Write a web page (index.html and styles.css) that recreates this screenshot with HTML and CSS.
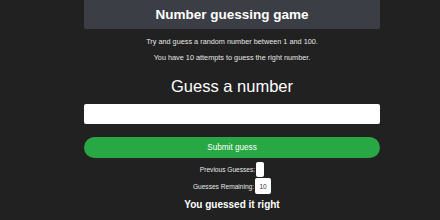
FILE: index.html
```html
<!DOCTYPE html>
<html lang="en">
<head>
    <meta charset="UTF-8">
    <meta name="viewport" content="width=device-width, initial-scale=1.0">
    <title>Number guessing game</title>
    <link rel="stylesheet" href="styles.css">
</head>
<body>
    <div class="container">
        <h1 class="title">Number guessing game</h1>
        <p class="intro first">Try and guess a random number between 1 and 100.</p>
        <p class="intro">You have 10 attempts to guess the right number.</p>

        <h2 class="guess-label">Guess a number</h2>
        <input type="text" class="guess-field" id="guessField">
        <button class="guess-submit" id="submitGuess">Submit guess</button>

        <div class="stat-row first-row">
            <span class="stat-label">Previous Guesses:</span>
            <span class="stat-box narrow" id="guesses"></span>
        </div>
        <div class="stat-row">
            <span class="stat-label">Guesses Remaining:</span>
            <span class="stat-box" id="remaining">10</span>
        </div>

        <p class="result">You guessed it right</p>
    </div>
</body>
</html>
```

FILE: styles.css
```css
body {
    margin: 0;
    background-color: #212121;
    font-family: "Liberation Sans", Arial, sans-serif;
    color: #fff;
}
.container {
    width: 296px;
    margin-left: 84px;
    display: flex;
    flex-direction: column;
}
.title {
    margin: 0;
    height: 29px;
    background: #3b3e44;
    border-radius: 0 0 2px 2px;
    font-size: 13.5px;
    font-weight: bold;
    display: flex;
    align-items: center;
    justify-content: center;
}
.intro {
    margin: 6px 0 0;
    font-size: 7.3px;
    line-height: 10px;
    text-align: center;
    color: #e6e6e6;
}
.intro.first {
    margin-top: 8px;
}
.guess-label {
    margin: 13px 0 0;
    font-size: 16.5px;
    font-weight: normal;
    line-height: 20px;
    text-align: center;
}
.guess-field {
    margin-top: 8px;
    height: 20px;
    border: none;
    border-radius: 2px;
    background: #fff;
    box-sizing: border-box;
    width: 100%;
}
.guess-submit {
    margin-top: 13px;
    height: 21px;
    border: none;
    border-radius: 10.5px;
    background: #28a745;
    color: #fff;
    font-family: inherit;
    font-size: 8.2px;
    cursor: pointer;
}
.stat-row {
    margin-top: 1px;
    display: flex;
    justify-content: center;
    align-items: center;
    gap: 1px;
    font-size: 6.6px;
    color: #e6e6e6;
}
.stat-row.first-row {
    margin-top: 4px;
}
.stat-box {
    width: 16px;
    height: 16px;
    background: #fff;
    color: #333;
    border-radius: 2px;
    display: flex;
    align-items: center;
    justify-content: center;
}
.stat-box.narrow {
    width: 8px;
    height: 15px;
}
.result {
    margin: 5px 0 0;
    font-size: 10px;
    font-weight: bold;
    line-height: 12px;
    text-align: center;
}
```
